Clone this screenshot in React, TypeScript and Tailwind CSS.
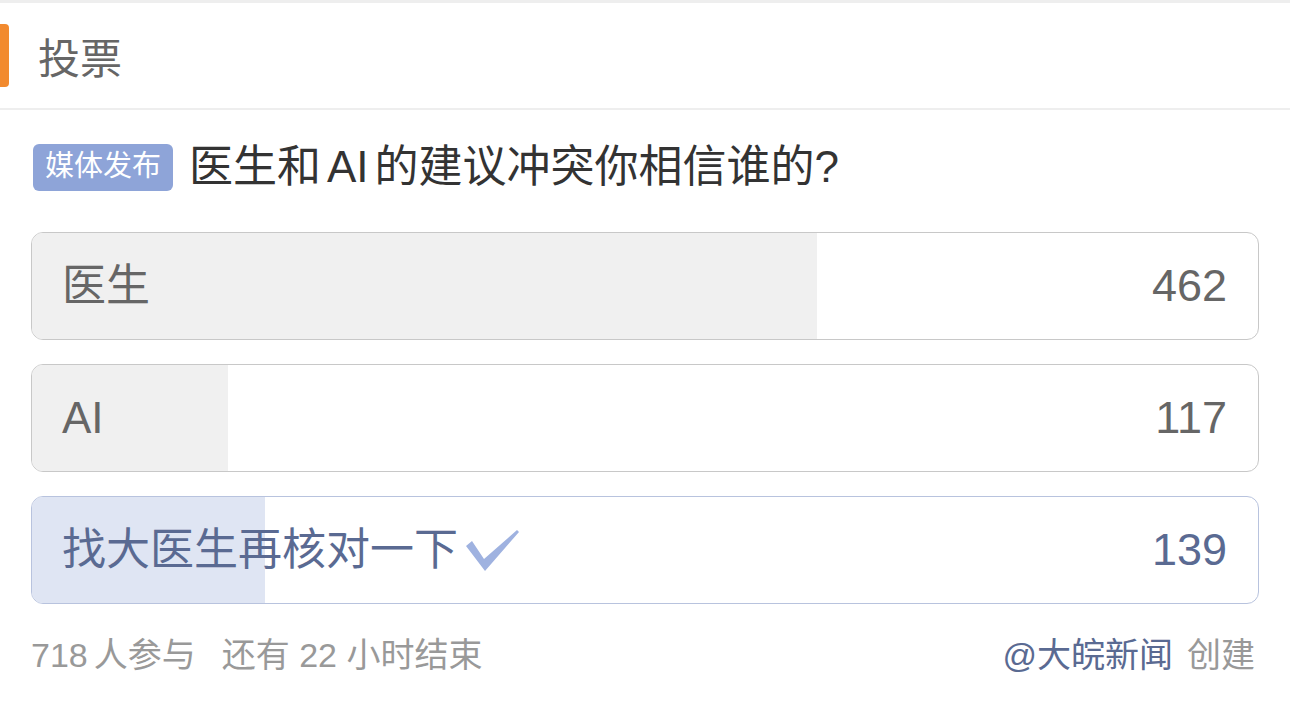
const font = { fontFamily: '"Liberation Sans", "Noto Sans CJK SC", sans-serif' };

const options = [
  { label: '医生', count: 462, selected: false },
  { label: 'AI', count: 117, selected: false },
  { label: '找大医生再核对一下', count: 139, selected: true },
];

const total = 718;

function Check() {
  return (
    <svg width="56" height="44" viewBox="0 0 56 44" className="ml-[6px] mt-[2px]">
      <path d="M2 17 L8 12 L20 30 L53 1 L55 3 L21 42 Z" fill="#9fb2e0" strokeLinejoin="round" />
    </svg>
  );
}

function OptionRow({ label, count, selected }: { label: string; count: number; selected: boolean }) {
  const pct = (count / total) * 100;
  const tone = selected ? 'text-[#5a6a92]' : 'text-[#666666]';
  return (
    <div
      className={`relative h-[108px] rounded-[12px] border-[1.5px] overflow-hidden bg-white ${
        selected ? 'border-[#b8c3de]' : 'border-[#c8c8c8]'
      }`}
    >
      <div
        className={`absolute left-0 top-0 bottom-0 ${selected ? 'bg-[#dfe5f3]' : 'bg-[#f0f0f0]'}`}
        style={{ width: `calc(${pct}% - 4px)` }}
      />
      <div className="relative flex h-full items-center justify-between pl-[30px] pr-[31px]">
        <div className={`flex items-center text-[44px] ${tone}`}>
          <span>{label}</span>
          {selected && <Check />}
        </div>
        <span className={`text-[45px] ${tone}`}>{count}</span>
      </div>
    </div>
  );
}

export default function App() {
  return (
    <div className="w-[1290px] h-[702px] bg-white overflow-hidden" style={font}>
      <div className="h-[3px] bg-[#eeeeee]" />
      <div className="flex h-[107px] items-center border-b-2 border-[#eeeeee]">
        <div className="w-[9px] h-[63px] rounded-r-[4px] bg-[#f28a2e]" />
        <span className="ml-[29px] mt-[8px] text-[42px] text-[#666666]">投票</span>
      </div>
      <div className="px-[31px]">
        <div className="flex items-center mt-[32px] h-[50px]">
          <span className="ml-[2px] flex h-[47px] items-center rounded-[6px] bg-[#8ea4d8] px-[12px] text-[29px] text-white">
            媒体发布
          </span>
          <span className="ml-[16px] text-[44px] text-[#333333]">
            医生和<span className="mx-[6px]">AI</span>的建议冲突你相信谁的?
          </span>
        </div>
        <div className="mt-[40px] flex flex-col gap-[24px]">
          {options.map((o) => (
            <OptionRow key={o.label} {...o} />
          ))}
        </div>
        <div className="mt-[26px] flex items-center justify-between text-[34px] text-[#999999]">
          <span>
            718<span className="ml-[6px]">人参与</span>
            <span className="ml-[26px]">还有</span> 22 小时结束
          </span>
          <span className="mr-[4px]">
            <span className="text-[#5a6a92]">@大皖新闻</span>
            <span className="ml-[14px]">创建</span>
          </span>
        </div>
      </div>
    </div>
  );
}
